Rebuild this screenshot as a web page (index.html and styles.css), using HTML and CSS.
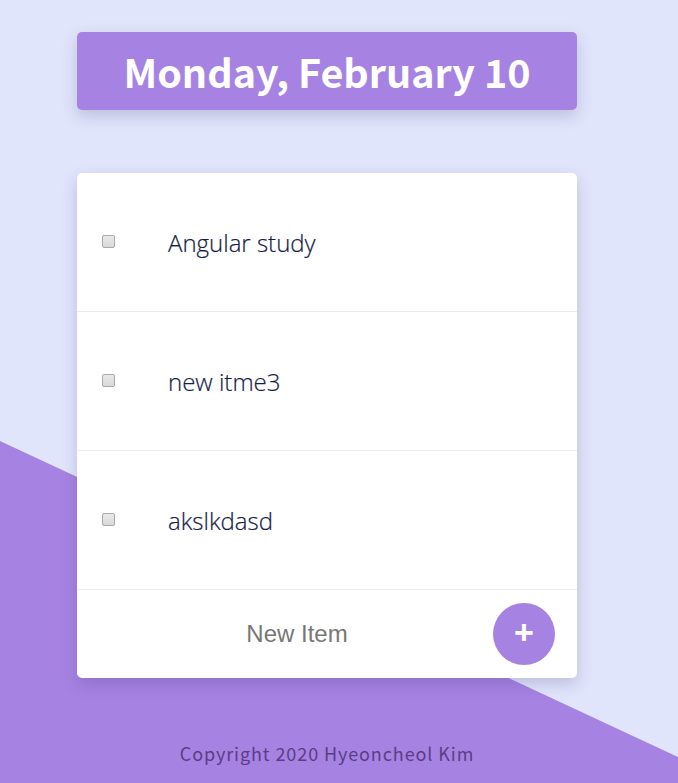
FILE: index.html
```html
<!DOCTYPE html>
<html>
<head>
<meta charset="utf-8">
<link rel="stylesheet" href="styles.css">
</head>
<body>
<div class="bg"></div>
<main class="app">
  <header class="date-box">
    <h1 class="date">Monday, February 10</h1>
  </header>
  <section class="card">
    <ul class="list">
      <li class="item"><input type="checkbox" class="check"><span class="label">Angular study</span></li>
      <li class="item"><input type="checkbox" class="check"><span class="label">new itme3</span></li>
      <li class="item"><input type="checkbox" class="check"><span class="label">akslkdasd</span></li>
    </ul>
    <div class="footer">
      <input class="new-input" type="text" placeholder="New Item">
      <button class="add-btn">+</button>
    </div>
  </section>
  <footer class="copyright">Copyright 2020 Hyeoncheol Kim</footer>
</main>
</body>
</html>
```
FILE: styles.css
```css
html, body {
  margin: 0;
  padding: 0;
  height: 783px;
  overflow: hidden;
}
body {
  background: #e1e5fb;
  position: relative;
  font-family: "Noto Sans CJK KR", "Noto Sans", sans-serif;
}
.bg {
  position: absolute;
  inset: 0;
  background: #a683e3;
  clip-path: polygon(0 441px, 678px 757px, 678px 783px, 0 783px);
}
.app {
  position: relative;
  width: 500px;
  margin-left: 77px;
  padding-top: 32px;
  display: flex;
  flex-direction: column;
}
.date-box {
  height: 78px;
  background: #a683e3;
  border-radius: 5px;
  box-shadow: 0 6px 16px rgba(60, 50, 120, 0.22);
  display: flex;
  align-items: center;
  justify-content: center;
}
.date {
  margin: 0;
  color: #fff;
  font-size: 39.5px;
  font-weight: 700;
  line-height: 1;
}
.card {
  margin-top: 63px;
  background: #fff;
  border-radius: 5px;
  box-shadow: 0 6px 16px rgba(60, 50, 120, 0.22);
}
.list {
  list-style: none;
  margin: 0;
  padding: 0;
}
.item {
  height: 138px;
  border-bottom: 1px solid #ececec;
  display: flex;
  align-items: center;
  padding-left: 25px;
}
.check {
  appearance: none;
  -webkit-appearance: none;
  margin: 0 0 2px 0;
  width: 13px;
  height: 13px;
  border: 1px solid #a9a9a9;
  border-radius: 2px;
  background: linear-gradient(#e9e9e9, #d9d9d9);
  box-sizing: border-box;
}
.label {
  margin-left: 53px;
  font-family: "Open Sans", sans-serif;
  font-weight: 300;
  font-size: 24px;
  color: #161c4a;
  -webkit-text-stroke: 0.2px #161c4a;
}
.footer {
  height: 88px;
  display: flex;
  align-items: center;
  padding-right: 22px;
}
.new-input {
  flex: 1;
  min-width: 0;
  border: none;
  outline: none;
  background: transparent;
  padding: 0 0 0 24px;
  text-align: center;
  font-family: "Liberation Sans", Arial, sans-serif;
  font-size: 24px;
  color: #333;
}
.new-input::placeholder {
  color: #777;
}
.add-btn {
  width: 62px;
  height: 62px;
  border-radius: 50%;
  border: none;
  background: #a683e3;
  color: #fff;
  font-family: "Liberation Sans", Arial, sans-serif;
  font-size: 34px;
  font-weight: 700;
  line-height: 1;
  padding: 0 0 4px 0;
  display: flex;
  align-items: center;
  justify-content: center;
}
.copyright {
  margin-top: 63px;
  text-align: center;
  font-size: 18px;
  letter-spacing: 0.9px;
  color: #5b3d85;
  line-height: 24px;
}
```
